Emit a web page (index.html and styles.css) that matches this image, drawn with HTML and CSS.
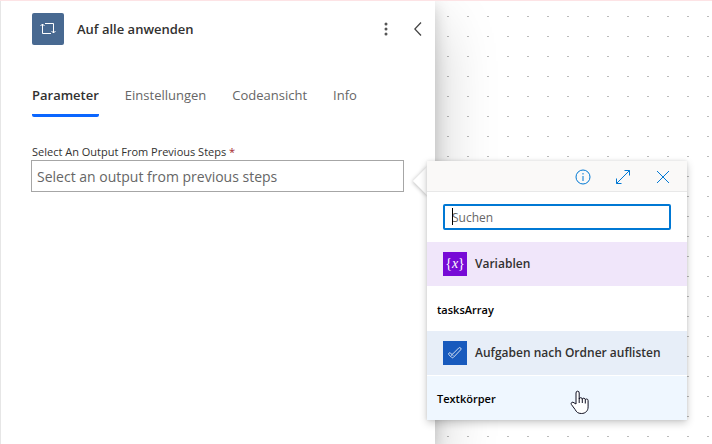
FILE: index.html
```
<!DOCTYPE html>
<html lang="de">
<head>
    <meta charset="UTF-8"/>
    <meta name="viewport" content="width=device-width, initial-scale=1"/>
    <title>Auf alle anwenden</title>
    <link rel="stylesheet" href="styles.css">
</head>
<body>
<div class="designer">
    <main class="panel">
        <header class="panel-header">
            <span class="action-icon">
                <svg width="16" height="12" viewBox="0 0 16 12" aria-hidden="true">
                    <path d="M2.500 1v9.500H11M.5 3l2-2 2 2M5 .5h8.500V10M11.500 8l2 2 2-2"/>
                </svg>
            </span>
            <h1>Auf alle anwenden</h1>
            <button class="icon-button" type="button" aria-label="Weitere Befehle">
                <svg class="dots" width="4" height="14" viewBox="0 0 4 14"><circle cx="2" cy="2" r="1.500"/><circle cx="2" cy="7" r="1.500"/><circle cx="2" cy="12" r="1.500"/></svg>
            </button>
            <button class="icon-button" type="button" aria-label="Zuklappen">
                <svg class="chevron" width="8" height="14" viewBox="0 0 8 14"><path d="M7 .5L.8 7 7 13.500"/></svg>
            </button>
        </header>
        <nav class="tabs">
            <a class="active" href="#parameter">Parameter</a>
            <a href="#einstellungen">Einstellungen</a>
            <a href="#codeansicht">Codeansicht</a>
            <a href="#info">Info</a>
        </nav>
        <form class="field">
            <label for="output">Select An Output From Previous Steps <span class="required">*</span></label>
            <div class="field-row">
                <input id="output" type="text" placeholder="Select an output from previous steps"/>
                <section class="picker" aria-label="Dynamischer Inhalt">
                    <div class="picker-bar">
                        <button type="button" aria-label="Info">
                            <svg width="16" height="16" viewBox="0 0 16 16"><circle cx="8" cy="8" r="7"/><path d="M8 7v5M8 4v1.500"/></svg>
                        </button>
                        <button type="button" aria-label="Erweitern">
                            <svg width="16" height="16" viewBox="0 0 16 16"><path d="M1.500 14.500l13-13M9.500 1.500h5v5M1.500 9.500v5h5"/></svg>
                        </button>
                        <button type="button" aria-label="Schließen">
                            <svg width="16" height="16" viewBox="0 0 16 16"><path d="M2 2l12 12M14 2L2 14"/></svg>
                        </button>
                    </div>
                    <div class="search">
                        <input type="text" placeholder="Suchen" aria-label="Suchen"/>
                        <span class="caret"></span>
                    </div>
                    <h2 class="group variables"><span class="group-icon">{<i>x</i>}</span>Variablen</h2>
                    <button class="token" type="button">tasksArray</button>
                    <h2 class="group tasks">
                        <span class="group-icon">
                            <svg class="check" width="14" height="12" viewBox="0 0 14 12" aria-hidden="true"><path d="M4.500 7.200l6.300-6.300q1-.7 1.900.1.800.9 0 1.800l-7.300 7.600q-.9.800-1.800 0L.9 7.700q-.7-.9.100-1.700.8-.6 1.600.1l2.600 2.600M3 8.600l1.500-1.400"/></svg>
                        </span>Aufgaben nach Ordner auflisten
                    </h2>
                    <button class="token hover" type="button">Textkörper</button>
                    <svg class="pointer" width="20" height="25" viewBox="0 0 20 25" aria-hidden="true">
                        <path d="M6 14V3q0-1.800 1.600-1.800T9.200 3v6q.2-1.300 1.500-1.300 1.500 0 1.600 1.500.2-1 1.400-1 1.500 0 1.600 1.600.2-.8 1.300-.8 1.500 0 1.500 1.700v6.200c0 4-2.600 6.600-6.700 6.600-3.500 0-5-1.500-6.300-4L1.400 14.500q-.7-1.500.4-2.100 1.100-.6 2.200.4zM9.200 8.500V13M12.300 9v4M15.300 10v3.500"/>
                    </svg>
                </section>
            </div>
        </form>
    </main>
    <div class="canvas"></div>
</div>
</body>
</html>
```
FILE: styles.css
```
* {box-sizing:border-box;}
body {background:#fff;color:#323130;font:13px/20px "Segoe UI","Open Sans","Noto Sans",sans-serif;margin:0;}
h1, h2 {font-size:13px;font-weight:600;margin:0;}
button {background:none;border:0;color:inherit;font:inherit;margin:0;padding:0;}
input {font-family:inherit;}
input::placeholder {color:#666;opacity:1;}
svg {display:block;fill:none;stroke:currentColor;}

.designer {border-top:1px solid #fde3e5;display:flex;min-height:100vh;overflow:hidden;}
.panel {background:#fff;border-left:1px solid #e6e6e6;box-shadow:0 26px 58px rgba(0,0,0,.22),0 5px 15px rgba(0,0,0,.18);flex:0 0 435px;padding:12px 32px 0 31px;position:relative;z-index:1;}
.canvas {background:conic-gradient(from 270deg at 2px 1px,#bbb 90deg,transparent 0) 12px 15px/20px 20px;flex:1;}

.panel-header {align-items:center;display:flex;margin-right:-31px;}
.panel-header h1 {flex:1;}
.action-icon {align-items:center;background:#486991;border-radius:2px;color:#fff;display:flex;height:32px;justify-content:center;margin-right:13px;width:32px;}
.icon-button {align-items:center;color:#444;display:flex;height:32px;justify-content:center;width:32px;}
.dots {fill:#555;stroke:none;}
.chevron {stroke-width:1.3;}

.tabs {display:flex;gap:26px;margin-top:40px;}
.tabs a {border-bottom:3px solid transparent;color:#666;padding-bottom:9px;text-decoration:none;}
.tabs a.active {border-color:#0a66ff;border-radius:2px;color:#323130;font-weight:600;}

.field {margin-top:26px;}
.field label {display:block;font-size:11px;line-height:17px;}
.required {color:#a4262c;}
.field-row {margin:0 -1px;position:relative;}
.field-row > input {border:1px solid #a6a6a6;color:#323130;display:block;font-size:14px;height:32px;padding:0 5px;width:100%;}

.picker {background:#fff;box-shadow:0 3px 8px rgba(0,0,0,.2),0 0 3px rgba(0,0,0,.1);left:calc(100% + 23px);position:absolute;top:1px;width:260px;}
.picker::before {background:#fff;box-shadow:0 1px 4px rgba(0,0,0,.25);content:"";height:20px;left:-10px;position:absolute;top:10px;transform:rotate(45deg);width:20px;z-index:-1;}
.picker-bar {background:#faf9f8;border-bottom:1px solid #e8e8e8;color:#0078d4;display:flex;gap:24px;height:31px;justify-content:flex-end;padding:0 16px;}
.picker-bar button {align-items:center;display:flex;height:32px;}
.search {padding:12px 16px;position:relative;}
.search .caret {background:#000;height:17px;left:25px;position:absolute;top:16px;width:1px;}
.search input {background:#fff;border:2px solid #0078d4;border-radius:2px;display:block;font-size:12px;height:26px;outline:0;padding:0 7px;width:100%;}

.group {align-items:center;display:flex;font-size:12px;gap:8px;height:44px;padding:0 16px;white-space:nowrap;}
.group-icon {align-items:center;color:#fff;display:flex;flex:none;height:24px;justify-content:center;width:24px;}
.variables {background:#f0e6fa;}
.variables .group-icon {background:#770bd6;font:14px/20px "Liberation Serif",serif;}
.tasks {background:#e7eef8;}
.tasks .group-icon {background:#185abd;}
.check {opacity:.8;}
.token {color:#000;display:block;font-size:11px;font-weight:600;height:44px;margin-top:1px;padding:2px 10px 0;text-align:left;width:100%;}
.token.hover {background:#eff7ff;}
.pointer {bottom:5px;color:#112;fill:#fff;left:143px;position:absolute;}
```
